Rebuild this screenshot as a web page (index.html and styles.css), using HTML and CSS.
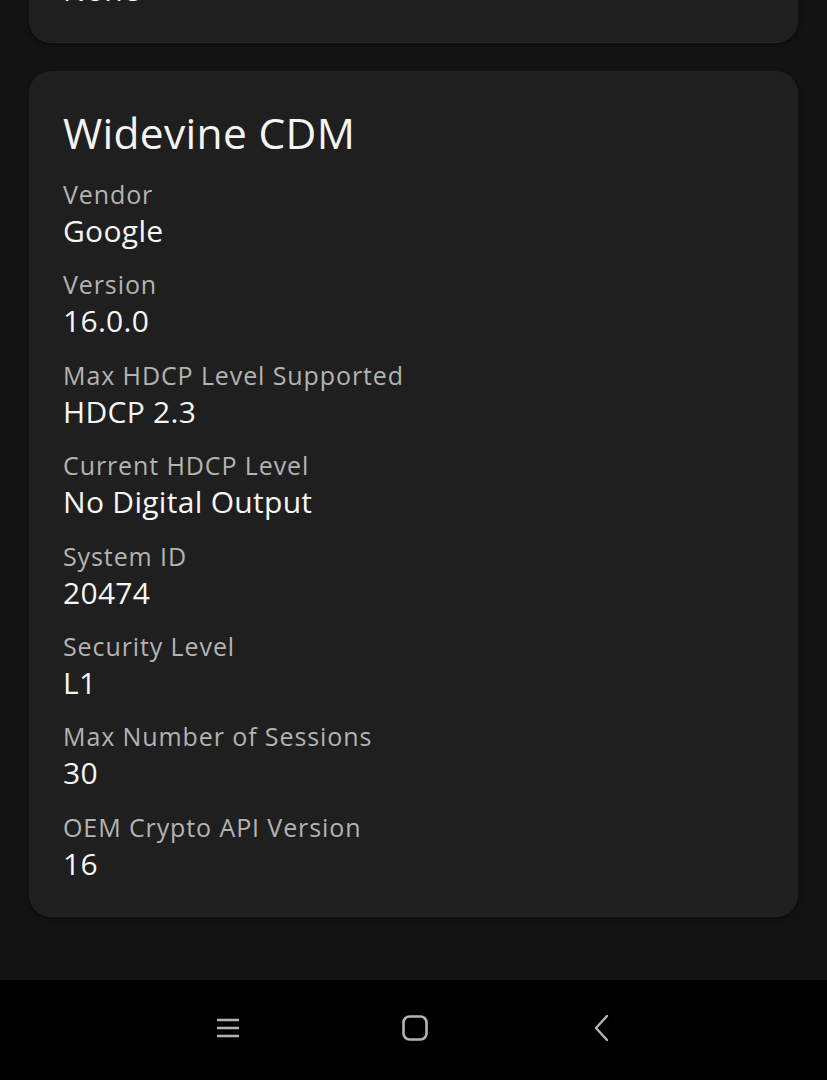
FILE: index.html
```html
<!DOCTYPE html>
<html lang="en">
<head>
  <meta charset="UTF-8" />
  <meta name="viewport" content="width=device-width, initial-scale=1" />
  <title>DRM Info</title>
  <link rel="stylesheet" href="styles.css">
</head>
<body>

  <main class="content">
    <section class="card card-prev">
      <div class="item">
        <div class="value">None</div>
      </div>
    </section>

    <section class="card">
      <h2 class="card-title">Widevine CDM</h2>
      <div class="item">
        <div class="label">Vendor</div>
        <div class="value">Google</div>
      </div>
      <div class="item">
        <div class="label">Version</div>
        <div class="value">16.0.0</div>
      </div>
      <div class="item">
        <div class="label">Max HDCP Level Supported</div>
        <div class="value">HDCP 2.3</div>
      </div>
      <div class="item">
        <div class="label">Current HDCP Level</div>
        <div class="value">No Digital Output</div>
      </div>
      <div class="item">
        <div class="label">System ID</div>
        <div class="value">20474</div>
      </div>
      <div class="item">
        <div class="label">Security Level</div>
        <div class="value">L1</div>
      </div>
      <div class="item">
        <div class="label">Max Number of Sessions</div>
        <div class="value">30</div>
      </div>
      <div class="item">
        <div class="label">OEM Crypto API Version</div>
        <div class="value">16</div>
      </div>
    </section>
  </main>

  <nav class="navbar">
    <button class="nav-btn" aria-label="Menu">
      <svg width="26" height="24" viewBox="0 0 26 24">
        <path d="M2 4h22M2 12h22M2 20h22" stroke="#b4b4b4" stroke-width="2.4" fill="none"/>
      </svg>
    </button>
    <button class="nav-btn" aria-label="Home">
      <svg width="28" height="28" viewBox="0 0 28 28">
        <rect x="2.5" y="2.5" width="23" height="23" rx="6" stroke="#b4b4b4" stroke-width="2.6" fill="none"/>
      </svg>
    </button>
    <button class="nav-btn" aria-label="Back">
      <svg width="18" height="28" viewBox="0 0 18 28">
        <path d="M14 2L3 14l11 12" stroke="#b4b4b4" stroke-width="2.4" fill="none" stroke-linejoin="round" stroke-linecap="round"/>
      </svg>
    </button>
  </nav>

</body>
</html>
```

FILE: styles.css
```css
html, body {
  height: 100%;
}
body {
  background: #131313;
  color: #f4f4f4;
  font-family: "Open Sans", "Noto Sans", sans-serif;
  margin: 0;
  display: flex;
  flex-direction: column;
  min-height: 100vh;
  overflow: hidden;
}
.content {
  flex: 1;
  padding: 0 29px;
  display: flex;
  flex-direction: column;
  gap: 29px;
}
.card {
  background: #1f1f1f;
  border-radius: 22px;
  padding: 36px 34px 31px;
  box-shadow: 0 1px 0 #262626, 0 2px 4px #0a0a0a;
}
.card-prev {
  margin-top: -31px;
  padding-top: 0;
}
.card-title {
  font-size: 42.5px;
  font-weight: 400;
  line-height: 52px;
  margin: 0 0 19px;
  letter-spacing: 0.3px;
}
.item + .item {
  margin-top: 16.4px;
}
.label {
  font-size: 25px;
  line-height: 32px;
  color: #b3b3b3;
  letter-spacing: 0.9px;
}
.value {
  font-size: 30px;
  line-height: 42px;
  color: #f6f6f6;
  letter-spacing: 0.3px;
}
.navbar {
  box-sizing: border-box;
  height: 100px;
  flex-shrink: 0;
  background: #000;
  display: flex;
  align-items: center;
  justify-content: space-between;
  padding: 0 210px 4px 213px;
}
.nav-btn {
  background: none;
  border: none;
  padding: 0;
  display: flex;
  align-items: center;
  justify-content: center;
  width: 30px;
  height: 30px;
}
```
